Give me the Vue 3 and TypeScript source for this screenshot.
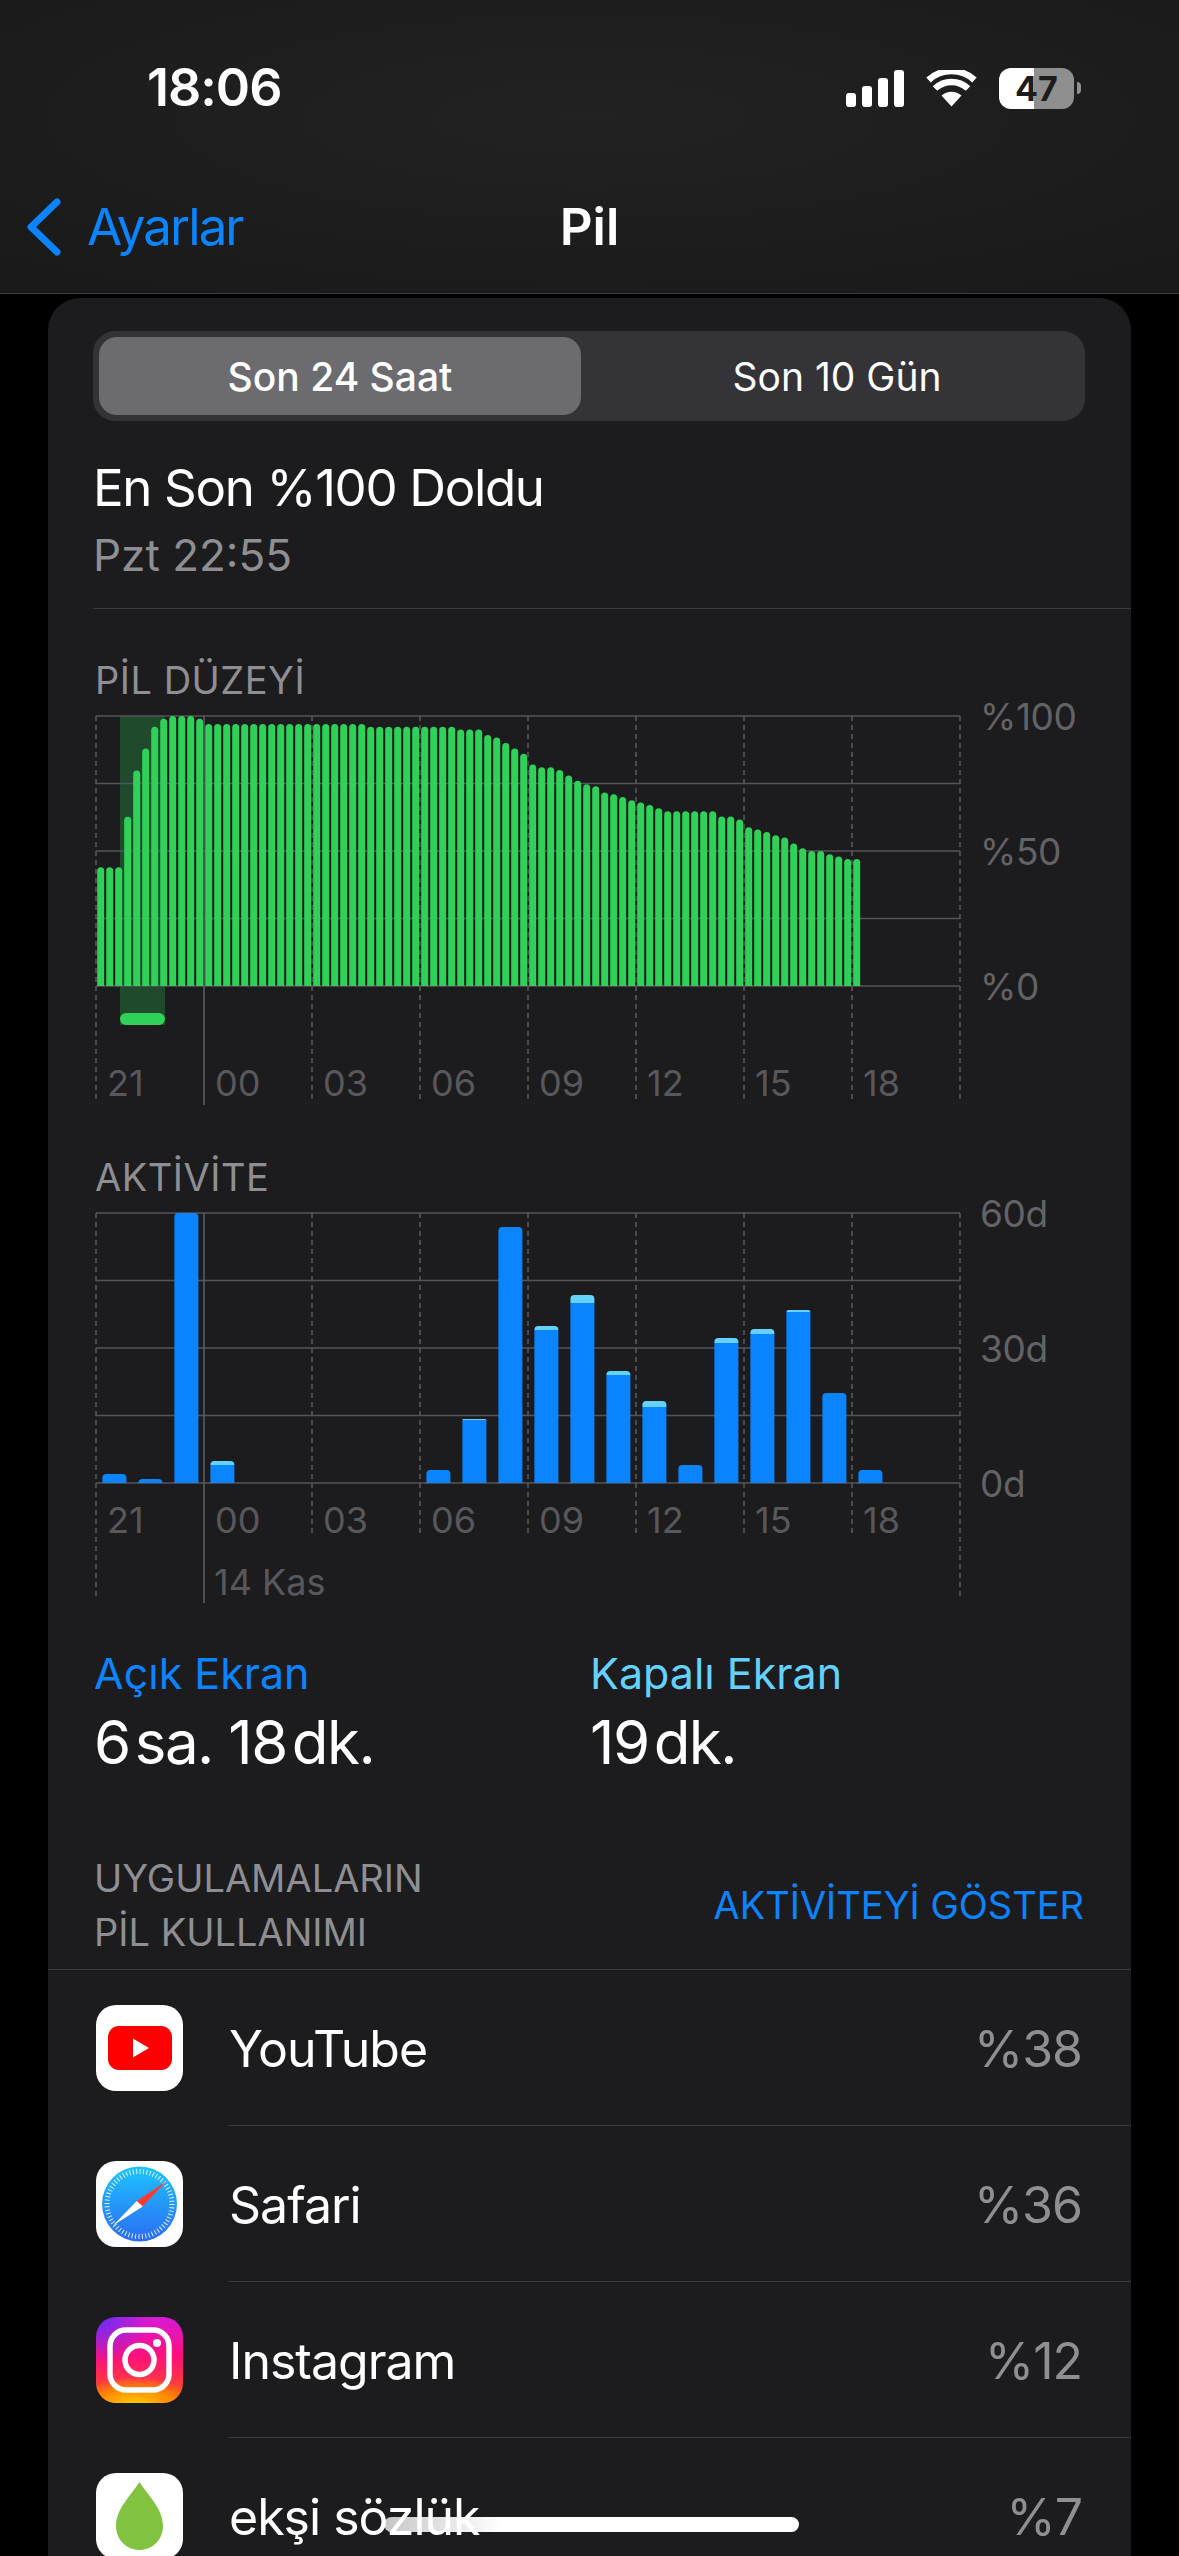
<template>
  <div class="screen">
    <header class="nav">
      <div class="status">
        <span class="time">18:06</span>
        <div class="status-icons">
          <svg class="signal" width="58" height="37" viewBox="0 0 58 37">
            <rect x="0" y="23" width="10" height="14" rx="3" />
            <rect x="16" y="16" width="10" height="21" rx="3" />
            <rect x="32" y="8" width="10" height="29" rx="3" />
            <rect x="48" y="0" width="10" height="37" rx="3" />
          </svg>
          <svg class="wifi" width="51" height="37" viewBox="0 0 51 37">
            <path d="M25.5 36.5 L15.5 25.5 A15 15 0 0 1 35.5 25.5 Z" fill="#fff" />
            <path d="M9 18.5 A24 24 0 0 1 42 18.5" />
            <path d="M2.5 10 A34 34 0 0 1 48.5 10" />
          </svg>
          <div class="battery"><span>47</span></div>
        </div>
      </div>
      <div class="nav-row">
        <a class="back">
          <svg width="34" height="58" viewBox="0 0 34 58">
            <path d="M30 4 L4 29 L30 54" />
          </svg>
          <span>Ayarlar</span>
        </a>
        <h1>Pil</h1>
      </div>
    </header>

    <main class="card">
      <div class="segment">
        <button class="seg active">Son 24 Saat</button>
        <button class="seg">Son 10 Gün</button>
      </div>

      <div class="last-charge">
        <div class="lc-title">En Son %100 Doldu</div>
        <div class="lc-sub">Pzt 22:55</div>
      </div>

      <h2 class="section-title first">PİL DÜZEYİ</h2>
      <div class="chart battery-chart">
        <svg width="865" height="390">
          <rect x="24" y="0" width="45" height="309" fill="#1f4a2c" />
          <line v-for="y in gridY" :key="y" x1="0" x2="864" :y1="y" :y2="y" class="h-line" />
          <path v-for="(d, i) in batteryPaths" :key="i" :d="d" fill="#30d158" />
          <rect x="24" y="297" width="45" height="12" rx="6" fill="#30d158" />
          <line v-for="x in gridX" :key="x" :x1="x" :x2="x" y1="0" y2="384" class="v-line" />
          <line x1="108" x2="108" y1="0" y2="389" class="v-solid" />
        </svg>
        <div class="x-axis">
          <span v-for="h in hours" :key="h">{{ h }}</span>
        </div>
        <div class="y-axis">
          <span>%100</span>
          <span>%50</span>
          <span>%0</span>
        </div>
      </div>

      <h2 class="section-title second">AKTİVİTE</h2>
      <div class="chart activity-chart">
        <svg width="865" height="391">
          <line v-for="y in gridY" :key="y" x1="0" x2="864" :y1="y" :y2="y" class="h-line" />
          <line
            v-for="x in gridX"
            :key="x"
            :x1="x"
            :x2="x"
            y1="0"
            :y2="x === 0 || x === 864 ? 384 : 324"
            class="v-line"
          />
          <line x1="108" x2="108" y1="0" y2="390" class="v-solid" />
          <g v-for="b in activityBars" :key="b.i">
            <path :d="b.on" fill="#0a84ff" />
            <path v-if="b.off" :d="b.off" fill="#64d2ff" />
          </g>
        </svg>
        <div class="x-axis">
          <span v-for="h in hours" :key="h">{{ h }}</span>
        </div>
        <div class="date-label">14 Kas</div>
        <div class="y-axis">
          <span>60d</span>
          <span>30d</span>
          <span>0d</span>
        </div>
      </div>

      <div class="stats">
        <div class="stat">
          <div class="stat-label on">Açık Ekran</div>
          <div class="stat-value"><span>6</span><span class="unit">sa.</span> <span>18</span><span class="unit">dk.</span></div>
        </div>
        <div class="stat">
          <div class="stat-label off">Kapalı Ekran</div>
          <div class="stat-value"><span>19</span><span class="unit">dk.</span></div>
        </div>
      </div>

      <div class="apps-head">
        <div class="apps-title">UYGULAMALARIN<br />PİL KULLANIMI</div>
        <a class="apps-link">AKTİVİTEYİ GÖSTER</a>
      </div>

      <ul class="apps">
        <li class="app">
          <div class="icon">
            <svg width="87" height="86" viewBox="0 0 87 86">
              <rect x="12" y="21" width="64" height="44" rx="11" fill="#ff0000" />
              <path d="M37 33.5 L53 43 L37 52.5 Z" fill="#fff" />
            </svg>
          </div>
          <div class="app-body"><span class="app-name">YouTube</span><span class="app-pct">%38</span></div>
        </li>
        <li class="app">
          <div class="icon">
            <svg width="87" height="86" viewBox="0 0 87 86">
              <defs>
                <linearGradient id="safari" x1="0" y1="0" x2="0" y2="1">
                  <stop offset="0" stop-color="#1ec4ff" />
                  <stop offset="1" stop-color="#2a6cf2" />
                </linearGradient>
              </defs>
              <circle cx="43.5" cy="43" r="37.5" fill="url(#safari)" />
              <circle cx="43.5" cy="43" r="32.5" fill="none" stroke="#fff" stroke-opacity=".85" stroke-width="5" stroke-dasharray="1 2.4" />
              <path d="M70 20.5 L46.7 45.6 L40.7 40 Z" fill="#ff3b30" />
              <path d="M17 64.6 L40.7 40 L46.7 45.6 Z" fill="#fff" />
            </svg>
          </div>
          <div class="app-body"><span class="app-name">Safari</span><span class="app-pct">%36</span></div>
        </li>
        <li class="app">
          <div class="icon instagram">
            <svg width="87" height="86" viewBox="0 0 87 86">
              <rect x="14" y="13" width="59" height="60" rx="16" fill="none" stroke="#fff" stroke-width="5.5" />
              <circle cx="43.5" cy="43" r="14.5" fill="none" stroke="#fff" stroke-width="5.5" />
              <circle cx="61" cy="26" r="4" fill="#fff" />
            </svg>
          </div>
          <div class="app-body"><span class="app-name">Instagram</span><span class="app-pct">%12</span></div>
        </li>
        <li class="app">
          <div class="icon">
            <svg width="87" height="86" viewBox="0 0 87 86">
              <path d="M43.5 9 C50 20 67 35 67 53 C67 67 56 77 43.5 77 C31 77 20 67 20 53 C20 35 37 20 43.5 9 Z" fill="#81c341" />
            </svg>
          </div>
          <div class="app-body"><span class="app-name">ekşi sözlük</span><span class="app-pct">%7</span></div>
        </li>
      </ul>
    </main>

    <div class="home-bar"></div>
  </div>
</template>

<script setup lang="ts">
const hours = ['21', '00', '03', '06', '09', '12', '15', '18']
const gridY = [0, 67.5, 135, 202.5, 270]
const gridX = [0, 108, 216, 324, 432, 540, 648, 756, 864].filter((x) => x !== 108)

// battery percent per 15 min slot, read off the reference
const levels: number[] = [
  44, 44, 44, 62.7, 79.8, 88, 96, 99, 100, 100, 100, 99,
  ...Array(18).fill(97),
  ...Array(10).fill(96),
  95, 95, 95, 93, 92, 90, 88, 86, 82, 81, 81, 80, 78, 76,
  74.7, 74, 71.7, 71, 70, 68.8, 68, 67, 65.8,
  ...Array(6).fill(64.7),
  62.8, 62.8, 61.7, 58.8, 58, 57, 55.8, 55, 52.8, 51, 50, 50, 48.8, 48, 47, 47,
]

function topRounded(x: number, w: number, top: number, bottom: number, r: number): string {
  return `M${x} ${bottom}V${top + r}A${r} ${r} 0 0 1 ${x + r} ${top}H${x + w - r}A${r} ${r} 0 0 1 ${x + w} ${top + r}V${bottom}Z`
}

const batteryPaths = levels.map((p, i) => topRounded(1.2 + i * 9, 7, 270 - p * 2.7, 270, 3.5))

// [hour slot, total height, screen-off part]
const activity: [number, number, number][] = [
  [0, 9, 0], [1, 4, 0], [2, 270, 0], [3, 22, 4],
  [9, 13, 0], [10, 64, 1], [11, 256, 0], [12, 157, 4],
  [13, 188, 8], [14, 112, 4], [15, 82, 6], [16, 18, 0],
  [17, 145, 5], [18, 154, 5], [19, 173, 2], [20, 90, 0], [21, 13, 0],
]

const activityBars = activity.map(([i, h, off]) => {
  const x = 6.4 + i * 36
  const top = 270 - h
  return {
    i,
    on: off ? `M${x} ${top + off}H${x + 24}V270H${x}Z` : topRounded(x, 24, top, 270, 4),
    off: off ? topRounded(x, 24, top, top + off, Math.min(off, 4)) : '',
  }
})
</script>

<style scoped>
.screen {
  position: relative;
  width: 1179px;
  height: 2556px;
  overflow: hidden;
  background: #000;
  font-family: Inter, "Noto Sans", sans-serif;
  color: #fff;
}

.nav {
  height: 293px;
  box-sizing: content-box;
  border-bottom: 1px solid #3a3a3c;
  background: radial-gradient(ellipse 70% 70% at 50% 40%, #222222 0%, #1a1a1a 100%);
}
.status {
  display: flex;
  justify-content: space-between;
  align-items: center;
  height: 60px;
  padding: 58px 105px 0 147px;
}
.time {
  font-size: 52px;
  line-height: 60px;
  font-weight: 600;
  letter-spacing: -1px;
}
.status-icons {
  display: flex;
  align-items: center;
  gap: 22px;
}
.signal rect { fill: #fff; }
.wifi path:not([fill]) {
  fill: none;
  stroke: #fff;
  stroke-width: 6.5;
}
.battery {
  position: relative;
  width: 75px;
  height: 41px;
  border-radius: 12px;
  background: linear-gradient(90deg, #fff 47%, #8f8f8f 47%);
  color: #1c1c1e;
  font-size: 34px;
  font-weight: 700;
  line-height: 41px;
  text-align: center;
}
.battery::after {
  content: "";
  position: absolute;
  left: 78px;
  top: 14px;
  width: 4px;
  height: 12px;
  border-radius: 0 6px 6px 0;
  background: #8f8f8f;
}

.nav-row {
  position: relative;
  display: flex;
  align-items: center;
  justify-content: center;
  height: 60px;
  margin-top: 79px;
}
.nav-row h1 {
  margin: 0;
  font-size: 51px;
  line-height: 60px;
  font-weight: 600;
}
.back {
  position: absolute;
  left: 27px;
  top: 0;
  display: flex;
  align-items: center;
  gap: 26px;
  color: #0a84ff;
  font-size: 51px;
  line-height: 60px;
  letter-spacing: -1.9px;
}
.back svg path {
  fill: none;
  stroke: #0a84ff;
  stroke-width: 7;
  stroke-linecap: round;
  stroke-linejoin: round;
}

.card {
  width: 1083px;
  margin: 4px 0 0 48px;
  padding-top: 33px;
  border-radius: 32px 32px 0 0;
  background: #1c1c1e;
}

.segment {
  display: flex;
  width: 992px;
  height: 90px;
  margin-left: 45px;
  padding: 6px;
  box-sizing: border-box;
  border-radius: 22px;
  background: #333338;
}
.seg {
  width: 482px;
  border: none;
  border-radius: 18px;
  background: none;
  color: #fff;
  font-family: inherit;
  font-size: 39px;
  font-weight: 400;
}
.seg:last-child {
  flex: 1;
  padding-left: 20px;
}
.seg.active {
  background: #6b6b70;
  font-weight: 500;
}

.last-charge {
  margin: 37px 0 0 45px;
  padding-bottom: 26px;
  border-bottom: 1px solid #3a3a3c;
}
.lc-title {
  font-size: 51px;
  line-height: 60px;
  letter-spacing: -1.35px;
}
.lc-sub {
  margin-top: 10px;
  font-size: 44px;
  line-height: 54px;
  color: #8e8e93;
}

.section-title {
  margin: 0 0 0 47px;
  font-size: 38px;
  line-height: 44px;
  font-weight: 400;
  letter-spacing: 0.5px;
  color: #8e8e93;
}
.section-title.first { margin-top: 49px; margin-bottom: 14px; }
.section-title.second { margin-top: 49px; margin-bottom: 14px; }

.chart {
  position: relative;
  margin-left: 48px;
}
.chart svg {
  display: block;
  overflow: visible;
}
.h-line {
  stroke: #545458;
  stroke-width: 1.5;
}
.v-line {
  stroke: #5a5a5e;
  stroke-width: 1.5;
  stroke-dasharray: 5 4;
}
.v-solid {
  stroke: #5f5f62;
  stroke-width: 1.5;
}
.x-axis {
  position: absolute;
  left: 0;
  display: grid;
  grid-template-columns: repeat(8, 108px);
  color: #58585c;
  font-size: 36px;
  line-height: 44px;
}
.x-axis span { padding-left: 11px; }
.battery-chart .x-axis { top: 345px; }
.activity-chart .x-axis { top: 285px; }
.y-axis {
  position: absolute;
  left: 884px;
  top: -21px;
  height: 314px;
  display: flex;
  flex-direction: column;
  justify-content: space-between;
  color: #636366;
  font-size: 37px;
  line-height: 44px;
  letter-spacing: -0.4px;
}
.date-label {
  position: absolute;
  left: 118px;
  top: 347px;
  color: #58585c;
  font-size: 36px;
  line-height: 44px;
}

.stats {
  display: grid;
  grid-template-columns: 496px 1fr;
  margin: 43px 0 0 46px;
}
.stat-label {
  font-size: 43px;
  line-height: 52px;
}
.stat-label.on { color: #0a84ff; }
.stat-label.off { color: #64d2ff; }
.stat-value {
  margin-top: 8px;
  font-size: 60px;
  line-height: 70px;
  letter-spacing: -1.5px;
}
.unit { margin-left: 5px; }

.apps-head {
  display: flex;
  align-items: center;
  justify-content: space-between;
  margin: 74px 47px 0 46px;
  font-size: 38px;
  line-height: 54px;
}
.apps-title { color: #8e8e93; }
.apps-link { color: #0a84ff; }

.apps {
  margin: 10px 0 0;
  padding: 0;
  list-style: none;
  border-top: 1px solid #3a3a3c;
}
.app {
  display: flex;
  align-items: center;
  height: 156px;
  padding-left: 48px;
}
.icon {
  flex: none;
  width: 87px;
  height: 86px;
  border-radius: 20px;
  background: #fff;
  overflow: hidden;
}
.icon svg { display: block; }
.icon.instagram {
  background:
    radial-gradient(70% 35% at 45% 105%, #ffd600 0%, #ff9500 55%, rgba(255, 90, 30, 0) 100%),
    radial-gradient(55% 55% at 5% 0%, #6a2cf5 0%, rgba(106, 44, 245, 0) 100%),
    linear-gradient(180deg, #d61ad8 0%, #ff0f7b 45%, #ff2f50 70%, #ff6a00 100%);
}
.app-body {
  flex: 1;
  display: flex;
  align-items: center;
  justify-content: space-between;
  align-self: stretch;
  margin-left: 45px;
  padding: 3px 49px 0 1px;
  border-bottom: 1px solid #3a3a3c;
  font-size: 50px;
  letter-spacing: -1px;
}
.app-pct { color: #8e8e93; }

.home-bar {
  position: absolute;
  left: 384px;
  top: 2517px;
  width: 415px;
  height: 15px;
  border-radius: 8px;
  background: linear-gradient(90deg, rgba(255, 255, 255, 0.75) 0%, #fff 28%);
}
</style>

<style>
html, body {
  margin: 0;
  background: #000;
}
</style>
